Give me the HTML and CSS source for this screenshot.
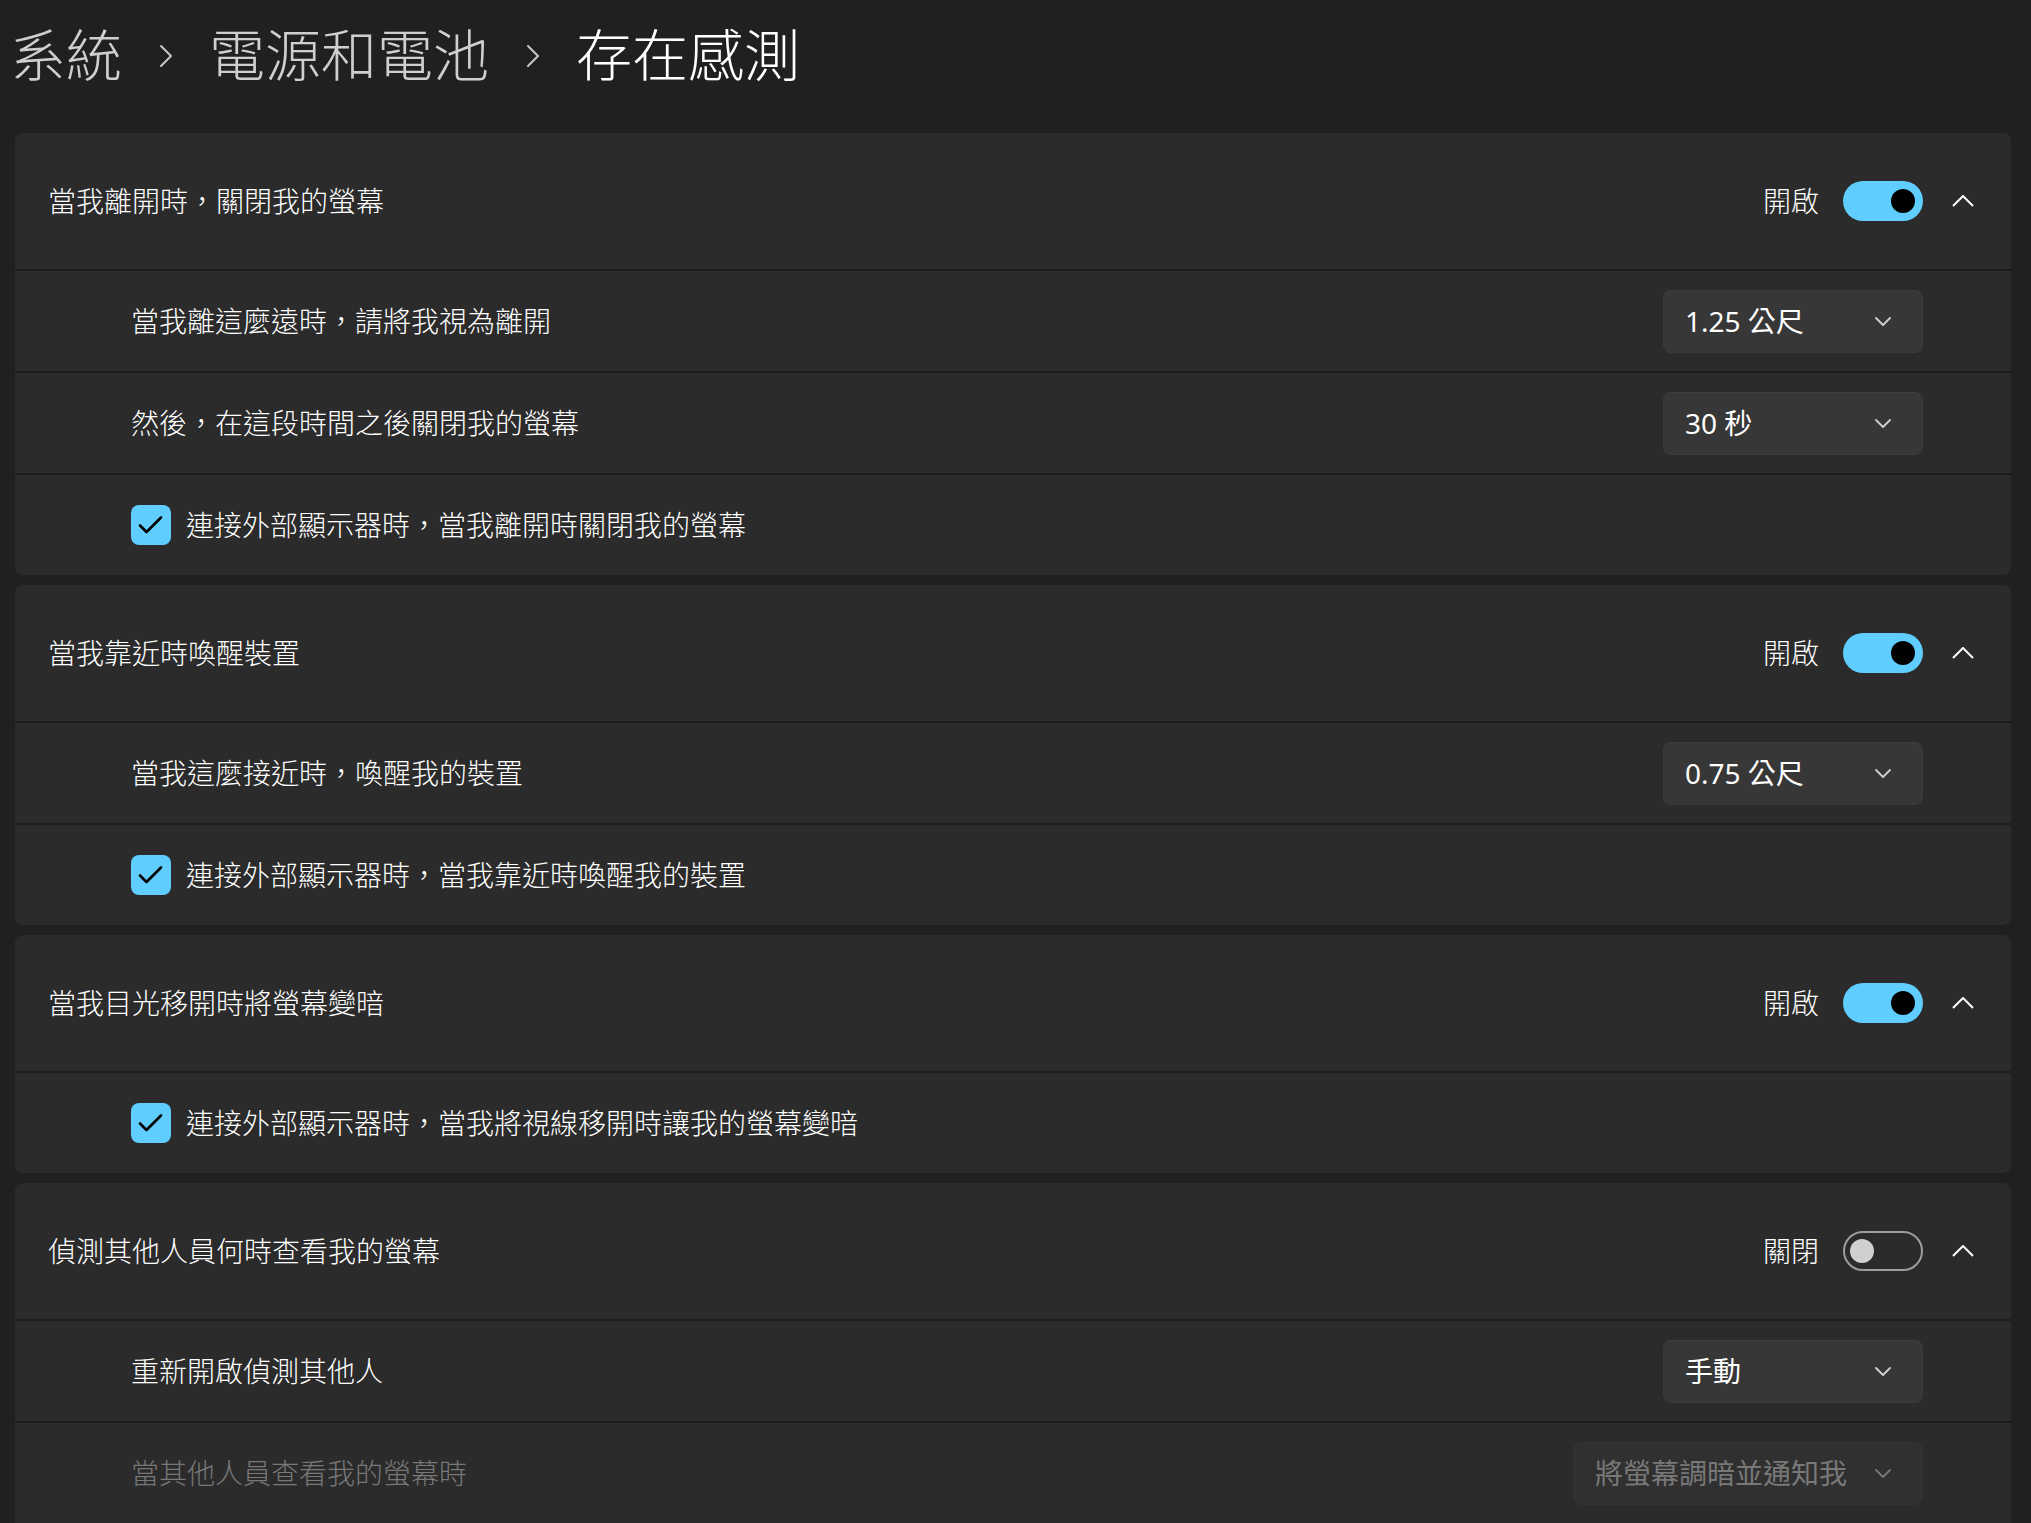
FILE: index.html
```html
<!DOCTYPE html>
<html lang="zh-Hant">
<head>
<meta charset="utf-8">
<title>存在感測</title>
<link rel="stylesheet" href="styles.css">
</head>
<body>
<div class="page">
  <header class="crumbs">
    <span class="crumb">系統</span>
    <svg class="sep" viewBox="0 0 14 24" width="14" height="24"><path d="M2 2 L12 12 L2 22" /></svg>
    <span class="crumb">電源和電池</span>
    <svg class="sep" viewBox="0 0 14 24" width="14" height="24"><path d="M2 2 L12 12 L2 22" /></svg>
    <span class="crumb current">存在感測</span>
  </header>

  <main class="cards">
    <section class="card">
      <div class="card-head">
        <span class="head-title">當我離開時，關閉我的螢幕</span>
        <span class="state">開啟</span>
        <span class="toggle on"><span class="knob"></span></span>
        <svg class="expand" viewBox="0 0 22 12" width="22" height="12"><path d="M1 11 L11 1 L21 11" /></svg>
      </div>
      <div class="row">
        <span class="row-label">當我離這麼遠時，請將我視為離開</span>
        <div class="select"><span class="value">1.25 公尺</span><svg class="caret" viewBox="0 0 16 9" width="16" height="9"><path d="M1 1 L8 8 L15 1" /></svg></div>
      </div>
      <div class="row">
        <span class="row-label">然後，在這段時間之後關閉我的螢幕</span>
        <div class="select"><span class="value">30 秒</span><svg class="caret" viewBox="0 0 16 9" width="16" height="9"><path d="M1 1 L8 8 L15 1" /></svg></div>
      </div>
      <div class="row">
        <label class="check-row">
          <span class="checkbox"><svg viewBox="0 0 40 40" width="40" height="40"><path d="M9 20.5 L15.5 27 L30 12.5" /></svg></span>
          <span class="check-label">連接外部顯示器時，當我離開時關閉我的螢幕</span>
        </label>
      </div>
    </section>

    <section class="card">
      <div class="card-head">
        <span class="head-title">當我靠近時喚醒裝置</span>
        <span class="state">開啟</span>
        <span class="toggle on"><span class="knob"></span></span>
        <svg class="expand" viewBox="0 0 22 12" width="22" height="12"><path d="M1 11 L11 1 L21 11" /></svg>
      </div>
      <div class="row">
        <span class="row-label">當我這麼接近時，喚醒我的裝置</span>
        <div class="select"><span class="value">0.75 公尺</span><svg class="caret" viewBox="0 0 16 9" width="16" height="9"><path d="M1 1 L8 8 L15 1" /></svg></div>
      </div>
      <div class="row">
        <label class="check-row">
          <span class="checkbox"><svg viewBox="0 0 40 40" width="40" height="40"><path d="M9 20.5 L15.5 27 L30 12.5" /></svg></span>
          <span class="check-label">連接外部顯示器時，當我靠近時喚醒我的裝置</span>
        </label>
      </div>
    </section>

    <section class="card">
      <div class="card-head">
        <span class="head-title">當我目光移開時將螢幕變暗</span>
        <span class="state">開啟</span>
        <span class="toggle on"><span class="knob"></span></span>
        <svg class="expand" viewBox="0 0 22 12" width="22" height="12"><path d="M1 11 L11 1 L21 11" /></svg>
      </div>
      <div class="row">
        <label class="check-row">
          <span class="checkbox"><svg viewBox="0 0 40 40" width="40" height="40"><path d="M9 20.5 L15.5 27 L30 12.5" /></svg></span>
          <span class="check-label">連接外部顯示器時，當我將視線移開時讓我的螢幕變暗</span>
        </label>
      </div>
    </section>

    <section class="card">
      <div class="card-head">
        <span class="head-title">偵測其他人員何時查看我的螢幕</span>
        <span class="state">關閉</span>
        <span class="toggle off"><span class="knob"></span></span>
        <svg class="expand" viewBox="0 0 22 12" width="22" height="12"><path d="M1 11 L11 1 L21 11" /></svg>
      </div>
      <div class="row">
        <span class="row-label">重新開啟偵測其他人</span>
        <div class="select"><span class="value">手動</span><svg class="caret" viewBox="0 0 16 9" width="16" height="9"><path d="M1 1 L8 8 L15 1" /></svg></div>
      </div>
      <div class="row">
        <span class="row-label disabled">當其他人員查看我的螢幕時</span>
        <div class="select disabled"><span class="value">將螢幕調暗並通知我</span><svg class="caret" viewBox="0 0 16 9" width="16" height="9"><path d="M1 1 L8 8 L15 1" /></svg></div>
      </div>
      <div class="row"></div>
    </section>
  </main>
</div>
</body>
</html>
```

FILE: styles.css
```css
html, body {
  margin: 0;
  padding: 0;
  background: #202020;
  height: 100%;
  overflow: hidden;
}

body {
  font-family: "Noto Sans", "Noto Sans CJK TC", sans-serif;
  font-weight: 300;
  color: #ffffff;
}

.page {
  display: flex;
  flex-direction: column;
}

.crumbs {
  display: flex;
  align-items: center;
  padding: 14px 0 0 10px;
  height: 80px;
  font-size: 56px;
  line-height: 80px;
  margin-bottom: 39px;
}

.crumb {
  color: #cfcfcf;
}

.crumb.current {
  color: #ffffff;
}

.sep {
  margin: 4px 36px 0 37px;
  fill: none;
  stroke: #c8c8c8;
  stroke-width: 2;
  stroke-linecap: round;
  stroke-linejoin: round;
}

.cards {
  display: flex;
  flex-direction: column;
  gap: 10px;
  padding: 0 20px 0 15px;
}

.card {
  background: #2b2b2b;
  border-radius: 8px;
  overflow: hidden;
}

.card-head {
  display: flex;
  align-items: center;
  height: 136px;
  padding: 0 37px 0 33px;
  font-size: 28px;
  line-height: 40px;
}

.head-title {
  flex: 1;
}

.state {
  margin-right: 24px;
}

.toggle {
  position: relative;
  box-sizing: border-box;
  width: 80px;
  height: 40px;
  border-radius: 20px;
}

.toggle.on {
  background: #60cdff;
}

.toggle.off {
  border: 2px solid #9d9d9d;
}

.knob {
  position: absolute;
  top: 8px;
  width: 24px;
  height: 24px;
  border-radius: 50%;
}

.toggle.on .knob {
  right: 8px;
  background: #000000;
}

.toggle.off .knob {
  left: 5px;
  top: 6px;
  background: #d0d0d0;
}

.expand {
  margin-left: 29px;
  fill: none;
  stroke: #ffffff;
  stroke-width: 2;
  stroke-linejoin: miter;
}

.row {
  display: flex;
  align-items: center;
  justify-content: space-between;
  min-height: 100px;
  border-top: 2px solid #1d1d1d;
  padding: 0 88px 0 116px;
  font-size: 28px;
  line-height: 40px;
}

.row-label.disabled {
  color: #787878;
}

.select {
  display: flex;
  align-items: center;
  box-sizing: border-box;
  min-width: 260px;
  height: 63px;
  padding: 0 31px 0 21px;
  background: #373737;
  border: 1px solid #3a3a3a;
  border-top-color: #3e3e3e;
  border-radius: 8px;
  font-weight: 400;
}

.select .value {
  flex: 1;
  white-space: nowrap;
}

.caret {
  margin-left: 28px;
  fill: none;
  stroke: #d0d0d0;
  stroke-width: 1.8;
  stroke-linecap: round;
  stroke-linejoin: round;
}

.select.disabled {
  background: #303030;
  border-color: #333333;
  color: #787878;
}

.select.disabled .caret {
  stroke: #787878;
}

.check-row {
  display: flex;
  align-items: center;
}

.checkbox {
  display: block;
  width: 40px;
  height: 40px;
  border-radius: 8px;
  background: #60cdff;
}

.checkbox svg {
  display: block;
  fill: none;
  stroke: #000000;
  stroke-width: 2.6;
  stroke-linecap: round;
  stroke-linejoin: round;
}

.check-label {
  margin-left: 15px;
}
```
